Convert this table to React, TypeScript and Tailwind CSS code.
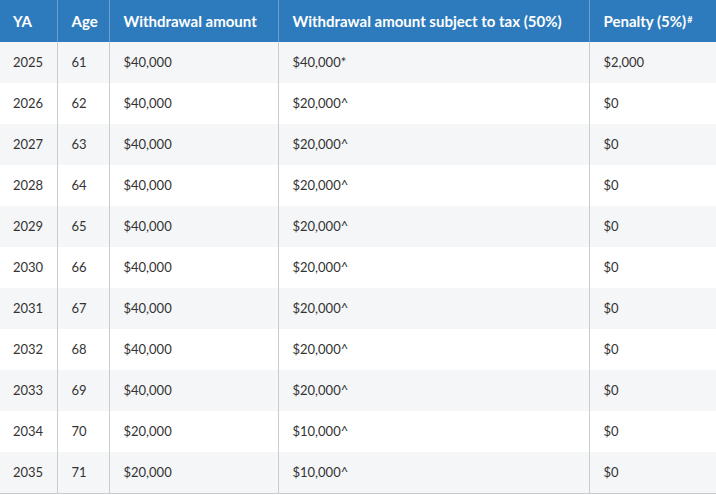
const rows = [
  ['2025', '61', '$40,000', '$40,000*', '$2,000'],
  ['2026', '62', '$40,000', '$20,000^', '$0'],
  ['2027', '63', '$40,000', '$20,000^', '$0'],
  ['2028', '64', '$40,000', '$20,000^', '$0'],
  ['2029', '65', '$40,000', '$20,000^', '$0'],
  ['2030', '66', '$40,000', '$20,000^', '$0'],
  ['2031', '67', '$40,000', '$20,000^', '$0'],
  ['2032', '68', '$40,000', '$20,000^', '$0'],
  ['2033', '69', '$40,000', '$20,000^', '$0'],
  ['2034', '70', '$20,000', '$10,000^', '$0'],
  ['2035', '71', '$20,000', '$10,000^', '$0'],
];

export default function App() {
  return (
    <div className="w-[716px] h-[495px] bg-white font-['Lato',sans-serif]">
      <table className="w-[716px] table-fixed border-collapse border-b border-[#c9cbcd]">
        <colgroup>
          <col className="w-[57px]" />
          <col className="w-[52px]" />
          <col className="w-[169px]" />
          <col className="w-[311px]" />
          <col />
        </colgroup>
        <thead>
          <tr className="h-[42px] bg-[#2d7bbd] text-white text-[15px] font-bold text-left">
            <th className="pl-[13px] border-r border-[#6a9fcf]">YA</th>
            <th className="pl-[14px] border-r border-[#6a9fcf]">Age</th>
            <th className="pl-[14px] border-r border-[#6a9fcf]">Withdrawal amount</th>
            <th className="pl-[14px] border-r border-[#6a9fcf]">Withdrawal amount subject to tax (50%)</th>
            <th className="pl-[14px]">
              Penalty (5%)<sup className="text-[9px] relative -top-[4px] ml-[1px]">#</sup>
            </th>
          </tr>
        </thead>
        <tbody>
          {rows.map((r, i) => (
            <tr key={r[0]} className={`h-[41px] text-[13px] text-[#333333] ${i % 2 === 0 ? 'bg-[#f5f6f7]' : 'bg-white'}`}>
              <td className="pl-[13px] border-r border-[#c9cbcd]">{r[0]}</td>
              <td className="pl-[14px] border-r border-[#c9cbcd]">{r[1]}</td>
              <td className="pl-[14px] border-r border-[#c9cbcd]">{r[2]}</td>
              <td className="pl-[14px] border-r border-[#c9cbcd]">{r[3]}</td>
              <td className="pl-[14px]">{r[4]}</td>
            </tr>
          ))}
        </tbody>
      </table>
    </div>
  );
}
